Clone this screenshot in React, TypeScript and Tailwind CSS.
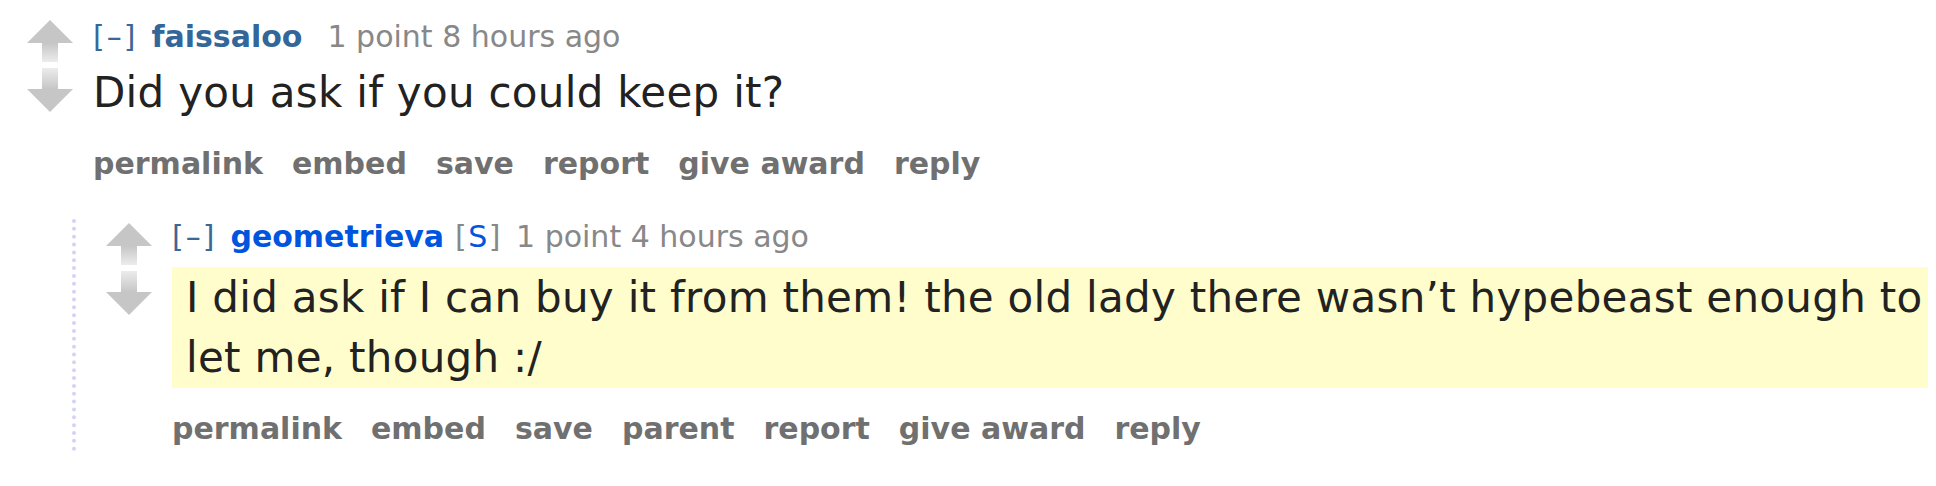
import React, { useId } from 'react';

interface CommentData {
  author: string;
  authorColor: string;
  submitter?: boolean;
  meta: string;
  body: string;
  highlight?: boolean;
  buttons: string[];
  replies?: CommentData[];
}

const thread: CommentData = {
  author: 'faissaloo',
  authorColor: 'text-[#336699]',
  meta: '1 point 8 hours ago',
  body: 'Did you ask if you could keep it?',
  buttons: ['permalink', 'embed', 'save', 'report', 'give award', 'reply'],
  replies: [
    {
      author: 'geometrieva',
      authorColor: 'text-[#0055df]',
      submitter: true,
      meta: '1 point 4 hours ago',
      body: 'I did ask if I can buy it from them! the old lady there wasn’t hypebeast enough to let me, though :/',
      highlight: true,
      buttons: ['permalink', 'embed', 'save', 'parent', 'report', 'give award', 'reply'],
    },
  ],
};

const VoteArrows: React.FC<{ className?: string }> = ({ className }) => {
  const id = useId().replace(/:/g, '');
  return (
    <div className={`w-[46px] shrink-0 flex flex-col gap-[6px] ${className ?? ''}`}>
      <svg width="46" height="42" viewBox="0 0 46 42">
        <defs>
          <linearGradient id={`up${id}`} x1="0" y1="0" x2="0" y2="1">
            <stop offset="0" stopColor="#c6c6c6" />
            <stop offset="1" stopColor="#ececec" />
          </linearGradient>
        </defs>
        <polygon points="23,0 46,23 0,23" fill="#c6c6c6" />
        <rect x="15" y="23" width="16" height="19" fill={`url(#up${id})`} />
      </svg>
      <svg width="46" height="44" viewBox="0 0 46 44">
        <defs>
          <linearGradient id={`dn${id}`} x1="0" y1="0" x2="0" y2="1">
            <stop offset="0" stopColor="#ececec" />
            <stop offset="1" stopColor="#c6c6c6" />
          </linearGradient>
        </defs>
        <rect x="15" y="0" width="16" height="21" fill={`url(#dn${id})`} />
        <polygon points="0,21 46,21 23,44" fill="#c6c6c6" />
      </svg>
    </div>
  );
};

const Comment: React.FC<{ data: CommentData; nested?: boolean }> = ({ data, nested }) => {
  return (
    <div>
      <div className="flex">
        <VoteArrows className={nested ? 'mt-[4px]' : 'mt-[1px]'} />
        <div className="ml-[20px] flex-1 min-w-0">
          <div className="whitespace-nowrap text-[30px] leading-[36px]">
            <span className="mr-[14px] tracking-[2px] text-[#3b6796]">[–]</span>
            <span className={`font-bold ${data.authorColor} ${data.submitter ? 'mr-[11px]' : 'mr-[25px]'}`}>
              {data.author}
            </span>
            {data.submitter && (
              <span className="mr-[14px] tracking-[1.5px] text-[#888]">
                [<span className="text-[#0055df]">S</span>]
              </span>
            )}
            <span className="text-[#888]">{data.meta}</span>
          </div>

          <div
            className={`text-[42px] leading-[60px] tracking-[0.28px] text-[#222] ${
              data.highlight ? 'mt-[12px] bg-[#fffdcc] pl-[14px] pt-[1px]' : 'mt-[8px]'
            }`}
          >
            <p>{data.body}</p>
          </div>

          <ul className="mt-[23px] flex gap-[29px] whitespace-nowrap text-[30px] leading-[36px] font-bold text-[#707070]">
            {data.buttons.map((b) => (
              <li key={b}>{b}</li>
            ))}
          </ul>
        </div>
      </div>

      {data.replies?.map((reply, i) => (
        <div
          key={i}
          className="ml-[45px] mt-[37px] border-l-[4px] border-dotted border-[#d3d3f7] pl-[30px] pb-[4px]"
        >
          <Comment data={reply} nested />
        </div>
      ))}
    </div>
  );
};

export default function App() {
  return (
    <div className="min-h-screen bg-white pl-[27px] pr-[8px] pt-[19px] font-['DejaVu_Sans',Verdana,sans-serif]">
      <Comment data={thread} />
    </div>
  );
}
